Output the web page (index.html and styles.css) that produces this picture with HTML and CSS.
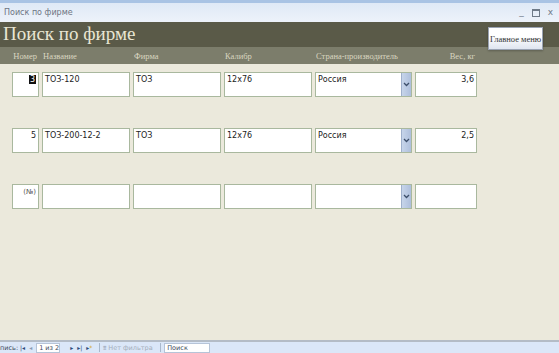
FILE: index.html
```html
<!DOCTYPE html>
<html lang="ru">
<head>
  <meta charset="UTF-8" />
  <title>Поиск по фирме</title>
  <link rel="stylesheet" href="styles.css">
</head>
<body>

<div class="window">
  <!-- Title bar -->
  <div class="titlebar">
    <span class="titlebar-text">Поиск по фирме</span>
    <div class="win-controls">
      <span class="ctl">_</span>
      <span class="ctl ctl-max"></span>
      <span class="ctl">x</span>
    </div>
  </div>

  <!-- Form header -->
  <div class="header">
    <div class="header-title">Поиск по фирме</div>
    <div class="labels">
      <div class="lbl right">Номер</div>
      <div class="lbl">Название</div>
      <div class="lbl">Фирма</div>
      <div class="lbl">Калибр</div>
      <div class="lbl">Страна-производитель</div>
      <div class="lbl right">Вес, кг</div>
    </div>
    <button class="menu-btn">Главное меню</button>
  </div>

  <!-- Records -->
  <div class="records">
    <div class="row">
      <div class="field num"><span class="sel">3</span></div>
      <div class="field">ТОЗ-120</div>
      <div class="field">ТОЗ</div>
      <div class="field">12x76</div>
      <div class="field combo">Россия<span class="arrow"><svg width="7" height="5" viewBox="0 0 7 5"><path d="M1 1 L3.5 3.5 L6 1" fill="none" stroke="#3d4f6b" stroke-width="1.3"/></svg></span></div>
      <div class="field num">3,6</div>
    </div>
    <div class="row">
      <div class="field num">5</div>
      <div class="field">ТОЗ-200-12-2</div>
      <div class="field">ТОЗ</div>
      <div class="field">12x76</div>
      <div class="field combo">Россия<span class="arrow"><svg width="7" height="5" viewBox="0 0 7 5"><path d="M1 1 L3.5 3.5 L6 1" fill="none" stroke="#3d4f6b" stroke-width="1.3"/></svg></span></div>
      <div class="field num">2,5</div>
    </div>
    <div class="row">
      <div class="field num new">(№)</div>
      <div class="field"></div>
      <div class="field"></div>
      <div class="field"></div>
      <div class="field combo"><span class="arrow"><svg width="7" height="5" viewBox="0 0 7 5"><path d="M1 1 L3.5 3.5 L6 1" fill="none" stroke="#3d4f6b" stroke-width="1.3"/></svg></span></div>
      <div class="field num"></div>
    </div>
  </div>

  <!-- Record navigation -->
  <div class="statusbar">
    <span class="st-label">пись:</span>
    <span class="nav">|◂</span>
    <span class="nav dim">◂</span>
    <span class="st-box pos">1 из 2</span>
    <span class="nav">▸</span>
    <span class="nav">▸|</span>
    <span class="nav">▸<i class="star">*</i></span>
    <span class="st-sep"></span>
    <span class="filter"><span class="funnel">⩩</span> Нет фильтра</span>
    <span class="st-sep"></span>
    <span class="st-box search">Поиск</span>
  </div>
</div>

</body>
</html>
```

FILE: styles.css
```css
body {
  margin: 0;
  font-family: "DejaVu Sans", Tahoma, sans-serif;
  background: #ebe9dc;
}

.window {
  width: 559px;
  height: 353px;
  display: flex;
  flex-direction: column;
  overflow: hidden;
}

/* title bar */
.titlebar {
  height: 19px;
  border-top: 3px solid #a9c3e4;
  background: linear-gradient(#dfe9f6, #edf2fa);
  display: flex;
  align-items: center;
  padding: 0 4px;
}

.titlebar-text {
  font-size: 8px;
  color: #6d7583;
}

.win-controls {
  margin-left: auto;
  display: flex;
  gap: 8px;
  align-items: center;
  padding-right: 2px;
}

.ctl {
  font-size: 9px;
  color: #6f7a88;
  line-height: 9px;
}

.ctl-max {
  width: 6px;
  height: 5px;
  border: 1px solid #6f7a88;
  border-top-width: 2px;
}

/* header */
.header {
  position: relative;
}

.header-title {
  height: 25px;
  background: #5a5a48;
  color: #e9e6d3;
  font-family: "Liberation Serif", "DejaVu Serif", serif;
  font-size: 19px;
  line-height: 24px;
  padding-left: 3px;
}

.labels {
  height: 17px;
  background: #7c7d6b;
  display: grid;
  grid-template-columns: 27px 88px 88px 88px 97px 62px;
  column-gap: 3px;
  padding-left: 12px;
  align-items: center;
}

.lbl {
  font-family: "Liberation Serif", "DejaVu Serif", serif;
  font-size: 8.5px;
  color: #d9d6c0;
  padding: 0 1px;
  white-space: nowrap;
}

.lbl.right {
  text-align: right;
  padding-right: 2px;
}

.menu-btn {
  position: absolute;
  left: 488px;
  top: 5px;
  width: 55px;
  height: 23px;
  padding: 0;
  border: 1px solid #9aa3b3;
  background: linear-gradient(#ffffff 40%, #dfe5f0);
  font-family: "Liberation Serif", "DejaVu Serif", serif;
  font-size: 8.5px;
  color: #333;
  white-space: nowrap;
  box-shadow: 0 1px 2px rgba(0,0,0,0.25);
}

/* records */
.records {
  flex: 1;
  padding: 8px 0 0 12px;
  display: flex;
  flex-direction: column;
  gap: 31px;
}

.row {
  display: grid;
  grid-template-columns: 27px 88px 88px 88px 97px 62px;
  column-gap: 3px;
  height: 25px;
}

.field {
  position: relative;
  background: #fff;
  border: 1px solid #a9b89e;
  font-size: 8px;
  color: #222;
  padding: 2px 2px 0;
  line-height: 10px;
  white-space: nowrap;
}

.field.num {
  text-align: right;
}

.field.new {
  font-size: 7px;
  color: #555;
}

.sel {
  background: #111;
  color: #fff;
  padding: 0 1px;
}

.combo {
  padding-right: 12px;
}

.arrow {
  position: absolute;
  right: 0;
  top: 0;
  bottom: 0;
  width: 9px;
  background: linear-gradient(90deg, #c7d5ea, #aebfdc);
  border-left: 1px solid #9fb0cc;
  display: flex;
  align-items: center;
  justify-content: center;
}

/* status bar */
.statusbar {
  height: 11px;
  border-top: 2px solid #b4bcc6;
  background: #dbe7f8;
  display: flex;
  align-items: center;
  font-size: 6.5px;
  color: #3d4a5c;
  white-space: nowrap;
}

.st-label {
  margin-right: 2px;
}

.nav {
  font-size: 6px;
  color: #2d4a78;
  margin-right: 4px;
}

.nav.dim {
  color: #8a9ab3;
}

.star {
  font-style: normal;
  color: #d4a21a;
}

.st-box {
  background: #fff;
  border: 1px solid #b6c4d8;
  height: 8px;
  line-height: 8px;
  padding: 0 2px;
}

.st-box.pos {
  width: 18px;
  margin-right: 10px;
}

.st-box.search {
  width: 40px;
}

.st-sep {
  width: 1px;
  height: 9px;
  background: #a9b8cc;
  margin: 0 3px;
}

.filter {
  color: #a4aebb;
  width: 54px;
}

.funnel {
  color: #9aa6b8;
}
```
